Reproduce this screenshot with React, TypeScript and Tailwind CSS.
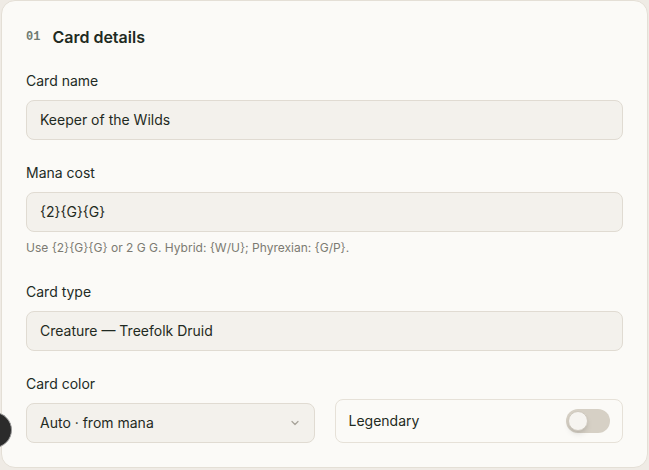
import type { ReactNode } from "react";

function Field({ label, children }: { label: string; children: ReactNode }) {
	return (
		<div className="flex flex-col">
			<label className="text-sm leading-5 font-normal text-[#222b25] mb-[9px]">{label}</label>
			{children}
		</div>
	);
}

function TextBox({ value }: { value: string }) {
	return (
		<div className="h-10 flex items-center px-[13px] rounded-lg border border-[#e0dbd2] bg-[#f3f1ec] text-sm text-[#1f2a22]">
			{value}
		</div>
	);
}

export default function App() {
	return (
		<div
			className="relative w-[649px] h-[470px] overflow-hidden bg-[#efebe5] pl-px pr-px"
			style={{ fontFamily: "Inter, 'Noto Sans', sans-serif" }}
		>
			<div className="h-[468px] rounded-[14px] border border-[#e4dfd6] bg-[#fbfaf7] px-6 pt-6">
				<div className="flex items-center gap-[12px] h-6">
					<span className="font-mono text-[12px] font-semibold text-[#6f7b72]">01</span>
					<h2 className="text-[16px] font-semibold text-[#1e2a22]">Card details</h2>
				</div>

				<div className="mt-[22px] flex flex-col">
					<Field label="Card name">
						<TextBox value="Keeper of the Wilds" />
					</Field>

					<div className="mt-[23px]">
						<Field label="Mana cost">
							<TextBox value="{2}{G}{G}" />
							<p className="mt-2 text-xs leading-4 text-[#7c7a72]">
								Use {"{2}{G}{G}"} or 2 G G. Hybrid: {"{W/U}"}; Phyrexian: {"{G/P}"}.
							</p>
						</Field>
					</div>

					<div className="mt-[26px]">
						<Field label="Card type">
							<TextBox value="Creature — Treefolk Druid" />
						</Field>
					</div>

					<div className="mt-[23px] grid grid-cols-2 gap-5 items-end">
						<Field label="Card color">
							<div className="h-10 flex items-center justify-between px-[13px] rounded-lg border border-[#e0dbd2] bg-[#f3f1ec] text-sm text-[#1f2a22]">
								<span>Auto · from mana</span>
								<svg width="12" height="12" viewBox="0 0 24 24" fill="none" stroke="#a8a49b" strokeWidth="2.5" strokeLinecap="round" strokeLinejoin="round">
									<path d="M6 9l6 6 6-6" />
								</svg>
							</div>
						</Field>
						<div className="h-11 flex items-center justify-between pl-[13px] pr-3 rounded-lg border border-[#e6e1d8] text-sm font-normal text-[#1f2a22]">
							<span>Legendary</span>
							<div className="w-11 h-6 rounded-full bg-[#d6d0c5] p-[2px] flex items-center">
								<div className="w-5 h-5 rounded-full bg-[#f6f4f0] border border-[#cfc9be] shadow-md" />
							</div>
						</div>
					</div>
				</div>
			</div>

			<div className="absolute left-[-24px] top-[412px] w-9 h-9 rounded-full bg-[#2b2b2b] border border-[#9a9a9a]" />
		</div>
	);
}
